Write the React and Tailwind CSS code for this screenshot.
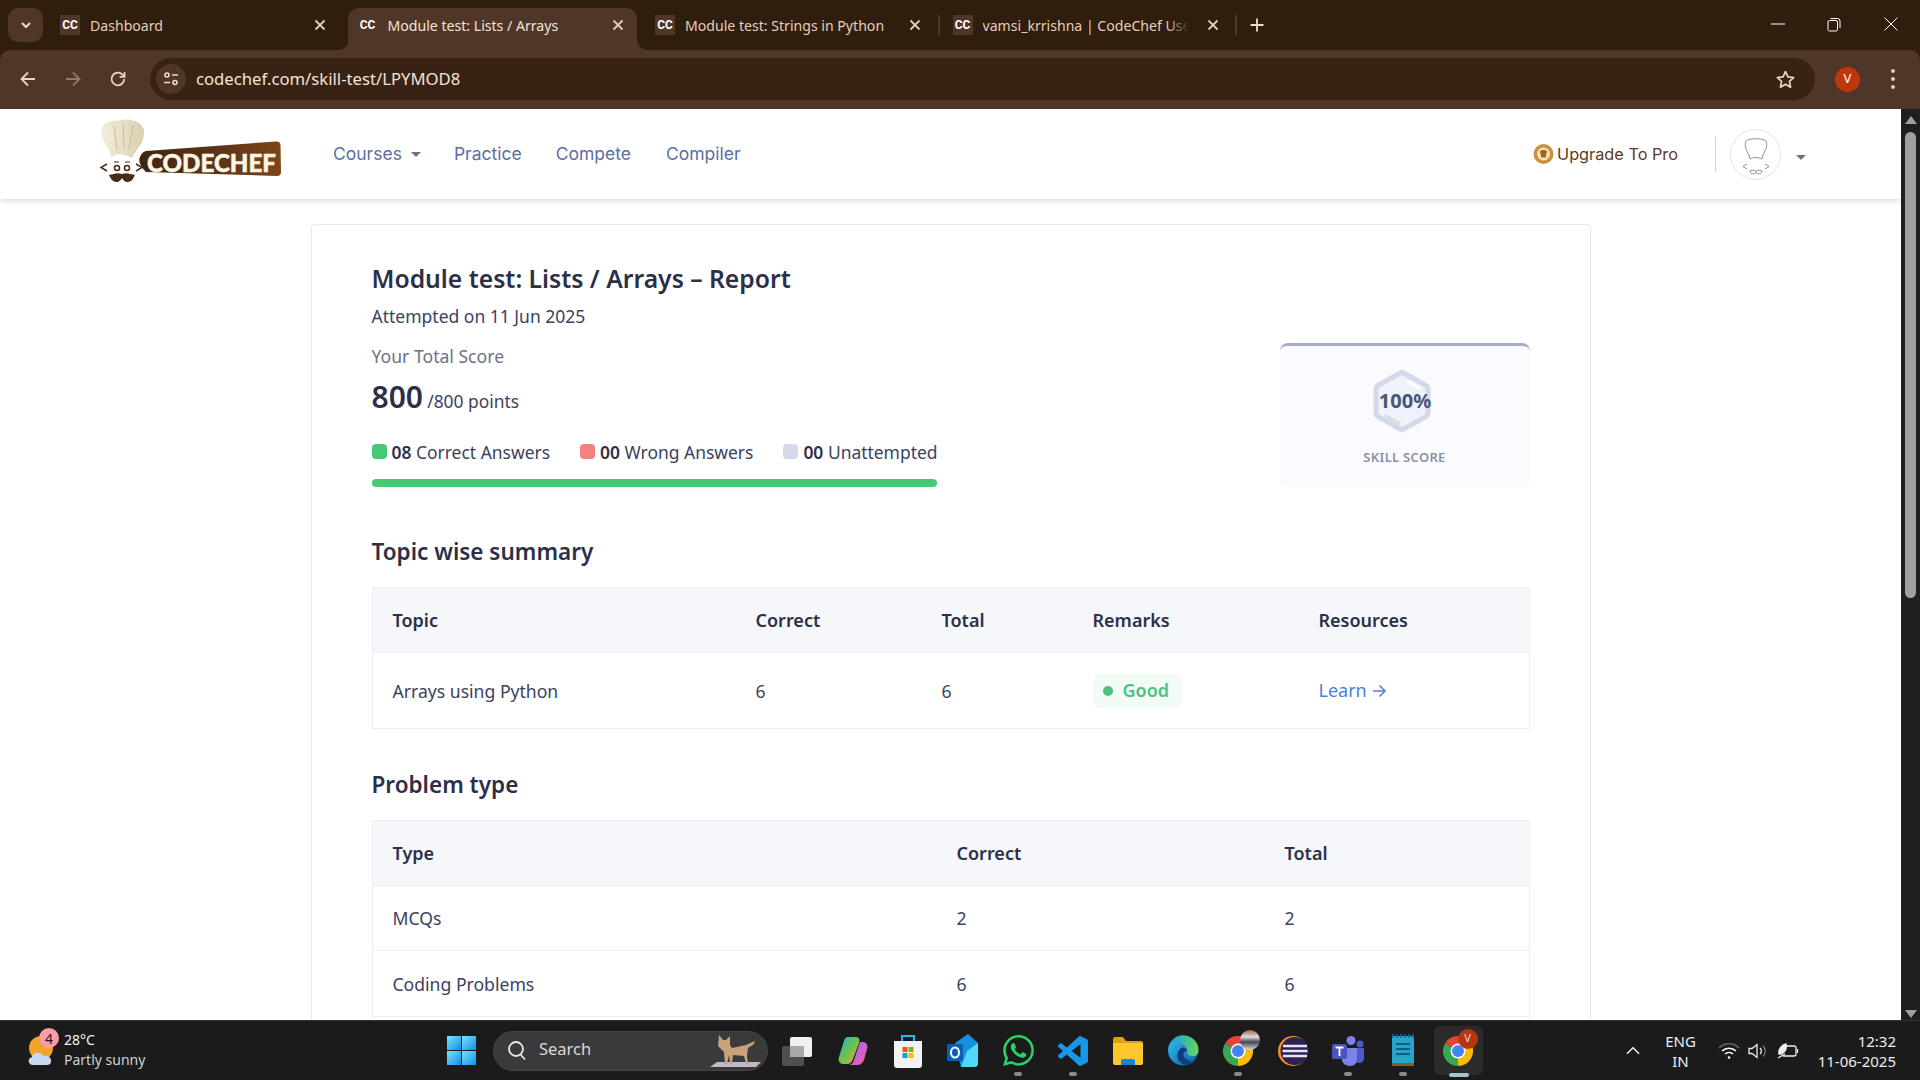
import React from 'react';

const Fav = () => (
  <span className="w-5 h-5 flex items-center justify-center text-[12px] font-bold text-white shrink-0 bg-[#4f3628]" style={{ fontFamily: 'Roboto, sans-serif' }}>CC</span>
);

const X = ({ c = '#e6cdb8', s = 14 }) => (
  <svg width={s} height={s} viewBox="0 0 14 14" fill="none" stroke={c} strokeWidth="1.8"><path d="M2.5 2.5l9 9M11.5 2.5l-9 9" /></svg>
);

const Tab = ({ title, active, sep, fade }) => (
  <div className="relative w-[297.5px] h-[50px] shrink-0 flex items-center">
    {active && (
      <>
        <div className="absolute left-[2.5px] right-[6px] top-2 bottom-0 bg-[#4f3628] rounded-t-[11px]" />
        <svg className="absolute left-[-8px] bottom-0" width="11" height="11" viewBox="0 0 11 11"><path d="M0 11a11 11 0 0 0 11-11v11z" fill="#4f3628" /></svg>
        <svg className="absolute right-[-5px] bottom-0" width="11" height="11" viewBox="0 0 11 11"><path d="M11 11A11 11 0 0 1 0 0v11z" fill="#4f3628" /></svg>
      </>
    )}
    <div className="relative ml-3 mr-[10px]"><Fav /></div>
    <div className="relative w-[216px] overflow-hidden whitespace-nowrap">
      <span className={`text-[14.1px] leading-5 ${active ? 'text-[#f3e3d6]' : 'text-[#e6cdb8]'}`}>{title}</span>
      {fade && <div className="absolute right-0 top-0 bottom-0 w-8 bg-gradient-to-r from-transparent to-[#2f1d0e] to-70%" />}
    </div>
    <div className="relative ml-[7px]"><X /></div>
    {sep && <div className="absolute right-[1px] top-[15px] h-5 w-[2px] bg-[#4f3628]" />}
  </div>
);

const Chrome = ({ s = 30 }) => (
  <svg width={s} height={s} viewBox="0 0 24 24">
    <path d="M12 12L1.6 6A12 12 0 0 1 22.4 6z" fill="#e94235" />
    <path d="M12 12L1.6 6A12 12 0 0 0 12 24z" fill="#34a853" />
    <path d="M12 12L12 24A12 12 0 0 0 22.4 6z" fill="#fbbc04" />
    <circle cx="12" cy="12" r="6" fill="#fff" />
    <circle cx="12" cy="12" r="4.8" fill="#4285f4" />
  </svg>
);

const Icon = ({ children, dot }) => (
  <div className="relative w-[55px] h-[60px] flex items-center justify-center shrink-0">
    {children}
    {dot && <span className="absolute bottom-[5px] left-[23.5px] w-2 h-1 rounded-sm bg-[#8a8a8a]" />}
  </div>
);

const Th = ({ children }) => <div className="pl-5 text-[18px] leading-6 font-semibold text-[#2b3048]">{children}</div>;
const Td = ({ children }) => <div className="pl-5 text-[17.6px] leading-6 text-[#3b4260]">{children}</div>;

const Tally = ({ color, n, label, ml }) => (
  <div className={`flex items-center ${ml}`}>
    <span className={`w-[15px] h-[15px] rounded-[4px] mr-[5px] mt-[-2px] ${color}`} />
    <span className="text-[17.45px] leading-6 text-[#3b4260] whitespace-nowrap"><b className="font-semibold text-[#2b3048]">{n}</b> {label}</span>
  </div>
);

export default function App() {
  return (
    <div className="w-[1920px] h-[1080px] overflow-hidden flex flex-col bg-[#2f1d0e]" style={{ fontFamily: '"Noto Sans", sans-serif' }}>
      {/* tab strip */}
      <div className="h-[50px] bg-[#2f1d0e] flex items-start shrink-0">
        <div className="ml-2 mt-2 mr-[5px] w-[35px] h-[34px] rounded-[10px] bg-[#4f3628] flex items-center justify-center">
          <svg width="12" height="12" viewBox="0 0 12 12" fill="none" stroke="#f0dccb" strokeWidth="2"><path d="M2 4l4 4 4-4" /></svg>
        </div>
        <Tab title="Dashboard" />
        <Tab title="Module test: Lists / Arrays" active />
        <Tab title="Module test: Strings in Python" sep />
        <Tab title="vamsi_krrishna | CodeChef User" sep fade />
        <div className="w-[38px] h-[50px] flex items-center justify-center">
          <svg width="16" height="16" viewBox="0 0 16 16" stroke="#f0dccb" strokeWidth="1.8"><path d="M8 1.5v13M1.5 8h13" /></svg>
        </div>
        <div className="ml-auto flex h-[48px]">
          <div className="w-[56px] flex items-center justify-center"><svg width="14" height="2"><path d="M0 1h14" stroke="#fff" /></svg></div>
          <div className="w-[56px] flex items-center justify-center">
            <svg width="14" height="15" viewBox="0 0 14 15" fill="none" stroke="#fff" strokeWidth="1"><rect x="1" y="3.5" width="9.5" height="10.5" rx="1.5" /><path d="M3.5 1.5h7a2.5 2.5 0 0 1 2.5 2.5v7" /></svg>
          </div>
          <div className="w-[58px] flex items-center justify-center">
            <svg width="14" height="14" viewBox="0 0 14 14" stroke="#fff" strokeWidth="1"><path d="M.5.5l13 13M13.5.5l-13 13" /></svg>
          </div>
        </div>
      </div>

      {/* toolbar */}
      <div className="h-[59px] bg-[#4f3628] rounded-t-[10px] flex items-center shrink-0 pb-[1px] relative">
        <div className="ml-[5px] w-[45px] flex justify-center">
          <svg width="18" height="18" viewBox="0 0 18 18" fill="none" stroke="#e9d3c0" strokeWidth="1.8"><path d="M16 9H2.5M9 2.5L2.5 9 9 15.5" /></svg>
        </div>
        <div className="w-[45px] flex justify-center">
          <svg width="18" height="18" viewBox="0 0 18 18" fill="none" stroke="#8f7868" strokeWidth="1.8"><path d="M2 9h13.5M9 2.5L15.5 9 9 15.5" /></svg>
        </div>
        <div className="w-[45px] flex justify-center">
          <svg width="18" height="18" viewBox="0 0 18 18" fill="none" stroke="#e9d3c0" strokeWidth="1.8"><path d="M15.2 9a6.3 6.3 0 1 1-1.8-4.4L15.5 6.5" /><path d="M15.5 2v4.8h-4.8" /></svg>
        </div>
        <div className="ml-[10px] w-[1665px] h-[42px] rounded-full bg-[#382214] flex items-center">
          <div className="ml-[6px] w-[30px] h-[30px] rounded-full bg-[#4f3628] flex items-center justify-center shrink-0">
            <svg width="16" height="16" viewBox="0 0 16 16" fill="none" stroke="#f0dccb" strokeWidth="1.6"><circle cx="4" cy="4" r="2" /><path d="M9 4h6M1 11.5h6" /><circle cx="12" cy="11.5" r="2" /></svg>
          </div>
          <span className="ml-[10px] text-[16.7px] text-[#f3e3d6] whitespace-nowrap">codechef.com/skill-test/LPYMOD8</span>
          <div className="ml-auto mr-[19px]">
            <svg width="21" height="21" viewBox="0 0 24 24" fill="none" stroke="#e9d3c0" strokeWidth="2" strokeLinejoin="round"><path d="M12 3l2.8 6 6.5.8-4.8 4.4 1.3 6.5L12 17.5l-5.8 3.2 1.3-6.5-4.8-4.4 6.5-.8z" /></svg>
          </div>
        </div>
        <div className="ml-[20px] w-[25px] h-[25px] rounded-full bg-[#bf360c] flex items-center justify-center text-[13px] text-white">V</div>
        <div className="ml-[31px] flex flex-col gap-[4px]">
          <span className="w-[4px] h-[4px] rounded-full bg-[#e9c9b0]" />
          <span className="w-[4px] h-[4px] rounded-full bg-[#e9c9b0]" />
          <span className="w-[4px] h-[4px] rounded-full bg-[#e9c9b0]" />
        </div>
      </div>

      {/* viewport */}
      <div className="flex-1 min-h-0 flex bg-white">
        <div className="flex-1 min-w-0 overflow-hidden">
          <header className="h-[90px] bg-white shadow-[0_2px_5px_rgba(0,0,0,0.14)] flex items-start relative">
            <svg className="ml-[90px] mt-[3px] shrink-0" width="200" height="76" viewBox="0 0 200 76">
              <defs>
                <linearGradient id="bar" x1="0" x2="1"><stop offset="0" stopColor="#3f2412" /><stop offset="0.6" stopColor="#5f3517" /><stop offset="1" stopColor="#7c4618" /></linearGradient>
                <linearGradient id="hat" x1="0" x2="1"><stop offset="0" stopColor="#f3eedc" /><stop offset="1" stopColor="#d9d0b0" /></linearGradient>
              </defs>
              <path d="M56 39L186 29.5Q190 29 190.500 33L191 60Q191 64 187 64L56 60Q47 51 50 45Q52 40 56 39z" fill="url(#bar)" />
              <path d="M13 27C8 17 13 8 27 9 42 4 56 12 54 22 53 32 46 38 42 46 32 41 25 41 22 46 19 38 16 33 13 27z" fill="url(#hat)" />
              <path d="M24 14l3 24M33 11l1 26M43 13l-4 24" stroke="#c9bf9c" strokeWidth="1" fill="none" />
              <path d="M17 52l-6 3.500 6 3.500M46 52l6 3.500-6 3.500" stroke="#4a2c17" strokeWidth="1.500" fill="none" />
              <circle cx="27" cy="56" r="2.500" fill="none" stroke="#4a2c17" strokeWidth="1.500" />
              <circle cx="37" cy="56" r="2.500" fill="none" stroke="#4a2c17" strokeWidth="1.500" />
              <path d="M24 50h5M35 50h5" stroke="#4a2c17" strokeWidth="1" />
              <path d="M32 62c-3-1-6-1-8 0-4 1-6 0-4 3 1 3 4 5 7 5 2 0 4-2 5-4 1 2 3 4 5 4 3 0 6-2 7-5 2-3 0-2-4-3-2-1-5-1-8 0z" fill="#4a2c17" />
              <text x="57" y="60" fill="#fbf6e4" stroke="#fbf6e4" strokeWidth="0.5" textLength="129" lengthAdjust="spacingAndGlyphs" fontSize="25" fontWeight="900" style={{ fontFamily: 'Lato, sans-serif' }}>CODECHEF</text>
            </svg>
            <nav className="ml-[43px] h-[90px] flex items-center text-[17.5px] text-[#5a6ea3]" style={{ fontFamily: 'Inter, sans-serif' }}>
              <span>Courses</span>
              <span className="ml-[9px] w-0 h-0 border-l-[5px] border-r-[5px] border-t-[5px] border-l-transparent border-r-transparent border-t-[#6b7280]" />
              <span className="ml-[33px]">Practice</span>
              <span className="ml-[34px]">Compete</span>
              <span className="ml-[35px]">Compiler</span>
            </nav>
            <div className="ml-auto h-[90px] flex items-center">
              <svg width="21" height="22" viewBox="0 0 21 22">
                <circle cx="10.500" cy="11" r="10" fill="#c8913f" />
                <circle cx="10.500" cy="11" r="6.500" fill="#f6e2b8" />
                <path d="M7 8.500c0-2 7-2 7 0l-1 4v2H8v-2z" fill="#a5671d" />
              </svg>
              <span className="ml-[3px] text-[16.3px] text-[#5c3a1e] whitespace-nowrap" style={{ fontFamily: 'Inter, sans-serif' }}>Upgrade To Pro</span>
              <span className="ml-[37px] w-px h-[35px] bg-[#cfd2d8]" />
              <div className="ml-[14px] w-[51px] h-[51px] rounded-full border border-[#e2e4ea] flex items-center justify-center">
                <svg width="40" height="44" viewBox="0 0 40 44" fill="none" stroke="#8b8f98" strokeWidth="1">
                  <path d="M10 9c3-3 16-3 20 0 2 4 0 8-3 14l-1 4c-4-2-9-2-12 0l-1-4c-3-5-5-10-3-14z" />
                  <path d="M11 32l-4 2.500 4 2.500M29 32l4 2.500-4 2.500" />
                  <path d="M20 39c-2-1-5-1-6 0 0 3 5 4 6 1 1 3 6 2 6-1-1-1-4-1-6 0z" />
                </svg>
              </div>
              <span className="ml-[15px] mt-[6px] w-0 h-0 border-l-[5px] border-r-[5px] border-t-[5px] border-l-transparent border-r-transparent border-t-[#6b7280]" />
              <span className="w-[95px]" />
            </div>
          </header>

          <main className="w-[1280px] mx-auto mt-[25px] bg-white border border-[#e6e8f0] rounded-[4px] px-[60px] pt-[38px] pb-10">
            <div className="flex justify-between">
              <div className="w-[565px]">
                <h1 className="text-[24.7px] leading-8 font-semibold text-[#2b3048]">Module test: Lists / Arrays – Report</h1>
                <p className="mt-[9px] text-[17.5px] leading-6 text-[#3b4260]">Attempted on 11 Jun 2025</p>
                <p className="mt-[16px] text-[17.6px] leading-6 text-[#6b7288]">Your Total Score</p>
                <p className="mt-[9px] leading-10 text-[#2b3048] whitespace-nowrap"><span className="text-[30px] font-semibold">800</span> <span className="text-[17.4px] text-[#3b4260]">/800 points</span></p>
                <div className="mt-[18px] flex">
                  <Tally color="bg-[#44c974]" n="08" label="Correct Answers" />
                  <Tally color="bg-[#f58080]" n="00" label="Wrong Answers" ml="ml-[30px]" />
                  <Tally color="bg-[#d3d9e8]" n="00" label="Unattempted" ml="ml-[30px]" />
                </div>
                <div className="mt-[15px] h-2 rounded-full bg-[#44c974]" />
              </div>
              <div className="self-end w-[250px] h-[144px] rounded-lg border-t-[3px] border-[#a3acc9] bg-[#fbfbff] flex flex-col items-center">
                <div className="relative mt-[23px] ml-[-5px] w-[60px] h-[64px] flex items-center justify-center">
                  <svg className="absolute inset-0" width="60" height="64" viewBox="0 0 60 64">
                    <path d="M30 3L54 16.500Q56 18 56 20V44Q56 46 54 47.500L30 61 6 47.500Q4 46 4 44V20Q4 18 6 16.500z" fill="#eef2f9" stroke="#d3d9e6" strokeWidth="5" strokeLinejoin="round" />
                    <path d="M36 13l11 6" stroke="#fff" strokeWidth="3" strokeLinecap="round" />
                    <path d="M14 47l13 7" stroke="#d8deea" strokeWidth="3.500" strokeLinecap="round" />
                  </svg>
                  <span className="relative ml-[6px] text-[20px] font-bold text-[#4a5578]">100%</span>
                </div>
                <span className="mt-[14px] text-[13px] leading-5 font-semibold tracking-[0.3px] text-[#8a90a8]">SKILL SCORE</span>
              </div>
            </div>

            <h2 className="mt-[49px] text-[22.5px] leading-8 font-semibold text-[#2b3048]">Topic wise summary</h2>
            <div className="mt-[19px] border border-[#eceef6]">
              <div className="grid grid-cols-[363px_186px_151px_226px_1fr] items-center h-[65px] bg-[#f6f7fb] border-b border-[#eceef6]">
                <Th>Topic</Th><Th>Correct</Th><Th>Total</Th><Th>Remarks</Th><Th>Resources</Th>
              </div>
              <div className="grid grid-cols-[363px_186px_151px_226px_1fr] items-center h-[75px]">
                <Td>Arrays using Python</Td><Td>6</Td><Td>6</Td>
                <div className="pl-5">
                  <span className="inline-flex items-center w-[89px] h-[34px] rounded-lg bg-[#f2fbf6] pl-[10px] text-[18px] font-semibold text-[#4fc17f]">
                    <span className="w-[10px] h-[10px] rounded-full bg-[#4fc17f] mr-[10px]" />Good
                  </span>
                </div>
                <div className="pl-5 flex items-center text-[18px] text-[#4a80e0]">Learn
                  <svg className="ml-[5px]" width="15" height="14" viewBox="0 0 15 14" fill="none" stroke="#4a80e0" strokeWidth="1.500"><path d="M1 7h12M7.500 1.500L13 7l-5.500 5.500" /></svg>
                </div>
              </div>
            </div>

            <h2 className="mt-[40px] text-[22.5px] leading-8 font-semibold text-[#2b3048]">Problem type</h2>
            <div className="mt-[19px] border border-[#eceef6]">
              <div className="grid grid-cols-[564px_328px_1fr] items-center h-[65px] bg-[#f6f7fb] border-b border-[#eceef6]">
                <Th>Type</Th><Th>Correct</Th><Th>Total</Th>
              </div>
              <div className="grid grid-cols-[564px_328px_1fr] items-center h-[65px] border-b border-[#eceef6]">
                <Td>MCQs</Td><Td>2</Td><Td>2</Td>
              </div>
              <div className="grid grid-cols-[564px_328px_1fr] items-center h-[65px]">
                <Td>Coding Problems</Td><Td>6</Td><Td>6</Td>
              </div>
            </div>
          </main>
        </div>

        {/* scrollbar */}
        <div className="w-[19px] bg-[#1f1f1f] flex flex-col items-center shrink-0">
          <div className="mt-[7px] w-0 h-0 border-l-[6px] border-r-[6px] border-b-[8px] border-l-transparent border-r-transparent border-b-[#a0a0a0]" />
          <div className="mt-[8px] w-[11px] h-[466px] rounded-full bg-[#a0a0a0]" />
          <div className="mt-auto mb-[2px] w-0 h-0 border-l-[6px] border-r-[6px] border-t-[8px] border-l-transparent border-r-transparent border-t-[#a0a0a0]" />
        </div>
      </div>

      {/* taskbar */}
      <div className="h-[60px] bg-[#1b1b1b] border-t border-[#333] flex items-center shrink-0 text-white relative">
        <div className="relative w-[447px] h-full flex items-center shrink-0">
          <svg className="ml-[27px]" width="30" height="32" viewBox="0 0 30 32">
            <circle cx="14" cy="13" r="12" fill="#f3a32a" />
            <path d="M6 30c-5 0-6-7-1-8 1-5 9-6 11-1 5-1 9 2 8 6 0 2-2 3-4 3z" fill="#c5d9f2" />
          </svg>
          <span className="absolute left-[39px] top-[7px] w-5 h-5 rounded-full bg-[#ff9aa8] flex items-center justify-center text-[14px] text-[#1b1b1b]">4</span>
          <div className="ml-[7px] mt-[-2px] flex flex-col text-[14px] leading-5">
            <span className="text-[#f2f2f2]">28°C</span>
            <span className="text-[#d0d0d0] whitespace-nowrap">Partly sunny</span>
          </div>
        </div>
        <svg className="shrink-0" width="29" height="29" viewBox="0 0 29 29">
          <defs>
            <linearGradient id="win" x1="0" y1="0" x2="1" y2="1"><stop offset="0" stopColor="#7fe2f8" /><stop offset="1" stopColor="#0f8fe8" /></linearGradient>
          </defs>
          <rect width="14" height="14" y="0" fill="url(#win)" /><rect x="15" width="14" height="14" fill="url(#win)" />
          <rect y="15" width="14" height="14" fill="url(#win)" /><rect x="15" y="15" width="14" height="14" fill="url(#win)" />
        </svg>
        <div className="ml-[17px] w-[275px] h-10 rounded-full bg-[#3a3a3a] border border-[#444] flex items-center shrink-0">
          <svg className="ml-[13px]" width="20" height="21" viewBox="0 0 20 21" fill="none" stroke="#e6e6e6" strokeWidth="1.800"><circle cx="9" cy="9" r="7" /><path d="M13.500 14.500l4.500 5" /></svg>
          <span className="ml-[12px] mt-[-2px] text-[16.5px] text-[#d8d8d8]">Search</span>
          <svg className="ml-auto mr-[5px]" width="52" height="34" viewBox="0 0 52 34">
            <path d="M0 33l7-5h44l-5 5z" fill="#c6b8c8" />
            <path d="M9 1l4 5h3l4-4 0 9 2 3 14-3 9-4-1 3-6 4-1 8 1 8h-2l-2-8-11-1-1 9h-2l-1-9-2 9h-2l-1-12-6-6z" fill="#c9a27c" />
          </svg>
        </div>
        <div className="ml-[2.500px] flex">
          <Icon>
            <svg width="34" height="32" viewBox="0 0 34 32"><rect x="1" y="11" width="22" height="20" rx="2" fill="#4f4f4f" /><rect x="9" y="2" width="22" height="20" rx="2" fill="#f0f0f0" /><rect x="9" y="11" width="14" height="11" fill="#a9a9a9" /></svg>
          </Icon>
          <Icon>
            <svg width="30" height="32" viewBox="0 0 30 32">
              <defs>
                <linearGradient id="cp1" x1="0" y1="0" x2="1" y2="1"><stop offset="0" stopColor="#18b8e0" /><stop offset="0.5" stopColor="#6cc24a" /><stop offset="1" stopColor="#f6a944" /></linearGradient>
                <linearGradient id="cp2" x1="0" y1="0" x2="1" y2="1"><stop offset="0" stopColor="#8a6be8" /><stop offset="0.6" stopColor="#d45fd0" /><stop offset="1" stopColor="#f0608a" /></linearGradient>
              </defs>
              <path d="M22 7h3c4 0 5 4 4 7l-3 11c-1 3-4 5-7 5h-9c3 0 5-2 6-5z" fill="url(#cp2)" />
              <path d="M10 2h8c3 0 4 3 3 6l-6 16c-1 3-3 5-6 5H5c-4 0-5-4-4-7L6 6c1-3 2-4 4-4z" fill="url(#cp1)" />
            </svg>
          </Icon>
          <Icon>
            <svg width="30" height="36" viewBox="0 0 30 36">
              <path d="M9 8V3h12v5" fill="none" stroke="#29b6f6" strokeWidth="2" />
              <path d="M1 8h28v24a3 3 0 0 1-3 3H4a3 3 0 0 1-3-3z" fill="#f2f2f2" />
              <rect x="9.500" y="14" width="5" height="5" fill="#f25022" /><rect x="15.500" y="14" width="5" height="5" fill="#7fba00" />
              <rect x="9.500" y="20" width="5" height="5" fill="#00a4ef" /><rect x="15.500" y="20" width="5" height="5" fill="#ffb900" />
            </svg>
          </Icon>
          <Icon>
            <svg width="32" height="36" viewBox="0 0 32 36">
              <path d="M8 10L21 1l10 9v20a4 4 0 0 1-4 4H14z" fill="#1490df" />
              <path d="M20 18l11-8v20a4 4 0 0 1-4 4H14z" fill="#50d9ff" />
              <rect x="0" y="11" width="16" height="17" rx="1.500" fill="#0a5fb4" />
              <ellipse cx="8" cy="19.500" rx="4" ry="5" fill="none" stroke="#fff" strokeWidth="2" />
            </svg>
          </Icon>
          <Icon dot>
            <svg width="31" height="33" viewBox="0 0 24 24" fill="#25d366"><path d="M17.472 14.382c-.297-.149-1.758-.867-2.03-.967-.273-.099-.471-.148-.67.15-.197.297-.767.966-.94 1.164-.173.199-.347.223-.644.075-.297-.15-1.255-.463-2.39-1.475-.883-.788-1.48-1.761-1.653-2.059-.173-.297-.018-.458.13-.606.134-.133.298-.347.446-.52.149-.174.198-.298.298-.497.099-.198.05-.371-.025-.52-.075-.149-.669-1.612-.916-2.207-.242-.579-.487-.5-.669-.51-.173-.008-.371-.01-.57-.01-.198 0-.52.074-.792.372-.272.297-1.04 1.016-1.04 2.479 0 1.462 1.065 2.875 1.213 3.074.149.198 2.096 3.2 5.077 4.487.709.306 1.262.489 1.694.625.712.227 1.36.195 1.871.118.571-.085 1.758-.719 2.006-1.413.248-.694.248-1.289.173-1.413-.074-.124-.272-.198-.57-.347m-5.421 7.403h-.004a9.87 9.87 0 01-5.031-1.378l-.361-.214-3.741.982.998-3.648-.235-.374a9.86 9.86 0 01-1.51-5.26c.001-5.45 4.436-9.884 9.888-9.884 2.64 0 5.122 1.03 6.988 2.898a9.825 9.825 0 012.893 6.994c-.003 5.45-4.437 9.884-9.885 9.884m8.413-18.297A11.815 11.815 0 0012.05 0C5.495 0 .16 5.335.157 11.892c0 2.096.547 4.142 1.588 5.945L.057 24l6.305-1.654a11.882 11.882 0 005.683 1.448h.005c6.554 0 11.89-5.335 11.893-11.893a11.821 11.821 0 00-3.48-8.413z" /></svg>
          </Icon>
          <Icon dot>
            <svg width="30" height="32" viewBox="0 0 24 24" fill="#1a96e6"><path d="M23.15 2.587L18.21.21a1.494 1.494 0 0 0-1.705.29l-9.46 8.63-4.12-3.128a.999.999 0 0 0-1.276.057L.327 7.261A1 1 0 0 0 .326 8.74L3.899 12 .326 15.26a1 1 0 0 0 .001 1.479L1.65 17.94a.999.999 0 0 0 1.276.057l4.12-3.128 9.46 8.63a1.492 1.492 0 0 0 1.704.29l4.942-2.377A1.5 1.5 0 0 0 24 20.06V3.939a1.5 1.5 0 0 0-.85-1.352zm-5.146 14.861L10.826 12l7.178-5.448v10.896z" /></svg>
          </Icon>
          <Icon>
            <svg width="30" height="28" viewBox="0 0 30 28">
              <path d="M0 2a2 2 0 0 1 2-2h8l3 4h15a2 2 0 0 1 2 2v4H0z" fill="#d9a20a" />
              <path d="M0 6h30v20a2 2 0 0 1-2 2H2a2 2 0 0 1-2-2z" fill="#fcc62d" />
              <path d="M8 28v-4a2 2 0 0 1 2-2h10a2 2 0 0 1 2 2v4z" fill="#1585d8" />
            </svg>
          </Icon>
          <Icon>
            <svg width="31" height="33" viewBox="0 0 31 33">
              <defs>
                <linearGradient id="ed" x1="0" y1="0" x2="1" y2="1"><stop offset="0" stopColor="#35c1f1" /><stop offset="1" stopColor="#0c59a4" /></linearGradient>
                <linearGradient id="ed2" x1="0" y1="0" x2="1" y2="0"><stop offset="0" stopColor="#1b9de2" /><stop offset="1" stopColor="#66d85a" /></linearGradient>
              </defs>
              <circle cx="15" cy="16.500" r="15" fill="url(#ed)" />
              <path d="M3 9C6 2 12 1.500 15 1.500 24 1.500 31 8 30.500 17c0 4-4 6-8 5-4-1-3-4-3.500-6C18 10 9 5 3 9z" fill="url(#ed2)" />
              <path d="M12 15c3-3 7-1 7 2-3 0-5 3-2 7 3 3 7 4 10 3-3 4-10 6-15 1-4-4-3-10 0-13z" fill="#0f3f7d" />
            </svg>
          </Icon>
          <Icon dot>
            <div className="relative w-[30px] h-[30px]">
              <Chrome />
              <span className="absolute left-[17px] top-[-6px] w-5 h-5 rounded-full bg-[linear-gradient(#a9614f_0%,#dcdcdc_35%,#445_60%,#ddd_100%)]" />
            </div>
          </Icon>
          <Icon>
            <svg width="32" height="32" viewBox="0 0 32 32">
              <circle cx="16" cy="16" r="15" fill="#f7941e" />
              <circle cx="17.500" cy="16" r="14" fill="#2c2255" />
              <path d="M6 11h24M5.500 16h25M6 21h24" stroke="#e8e4f5" strokeWidth="2.500" />
            </svg>
          </Icon>
          <Icon dot>
            <svg width="32" height="30" viewBox="0 0 32 30">
              <circle cx="19" cy="4.500" r="4.500" fill="#7b83eb" />
              <circle cx="28" cy="8" r="3.500" fill="#5059c9" />
              <path d="M23 12h9v10c0 3-2 5-5 5-1 0-3-1-4-2z" fill="#5059c9" />
              <path d="M10 12h15v12c0 3-3 6-7 6s-8-3-8-6z" fill="#7b83eb" />
              <rect x="0" y="8" width="15" height="15" rx="1.500" fill="#4b53bc" />
              <path d="M3.500 11.500h8M7.500 11.500v8.500" stroke="#fff" strokeWidth="1.800" />
            </svg>
          </Icon>
          <Icon dot>
            <svg width="22" height="33" viewBox="0 0 22 33">
              <rect x="0" y="2" width="22" height="28" fill="#29a3c9" />
              <rect x="0" y="29" width="22" height="3" fill="#8a5a2b" />
              <path d="M1 0v4M5 0v4M9 0v4M13 0v4M17 0v4M21 0v4" stroke="#1a6a8a" strokeWidth="1.500" />
              <path d="M4 10h14M4 15h14M4 20h14" stroke="#0d5f80" strokeWidth="2" />
            </svg>
          </Icon>
          <div className="relative w-[55px] h-[60px] flex items-center justify-center shrink-0">
            <div className="absolute left-[3px] top-[5px] w-[49px] h-[49px] rounded-md bg-[#2b2b2b]" />
            <div className="relative"><Chrome /></div>
            <span className="absolute left-[27px] top-[8px] w-[20px] h-[20px] rounded-full bg-[#b5360f] flex items-center justify-center text-[11px] text-[#f0d8c8]">V</span>
            <span className="absolute bottom-[4px] left-[18px] w-[20px] h-[4px] rounded-sm bg-[#a5c4cc]" />
          </div>
        </div>
        <div className="ml-[140px] w-[14px] flex justify-center shrink-0">
          <svg width="15" height="9" viewBox="0 0 15 9" fill="none" stroke="#eee" strokeWidth="1.600"><path d="M1 8l6.500-6.500L14 8" /></svg>
        </div>
        <div className="ml-[17px] w-[48px] flex flex-col items-center text-[15px] leading-5 text-[#eee]"><span>ENG</span><span>IN</span></div>
        <div className="ml-[13px] flex items-center">
          <svg width="22" height="18" viewBox="0 0 22 18" fill="none" stroke="#fff" strokeWidth="1.500"><path d="M1 6a14 14 0 0 1 20 0" stroke="#666" /><path d="M4 9a10 10 0 0 1 14 0M7 12a6 6 0 0 1 8 0" /><circle cx="11" cy="15.500" r="1.300" fill="#fff" stroke="none" /></svg>
          <svg className="ml-[8px]" width="21" height="18" viewBox="0 0 21 18" fill="none" stroke="#eee" strokeWidth="1.300"><path d="M1 6.500h3L9 2.500v13l-5-4H1z" /><path d="M12 6a4 4 0 0 1 0 6" /><path d="M15 3.500a8 8 0 0 1 0 11" stroke="#777" /></svg>
          <svg className="ml-[8px]" width="22" height="18" viewBox="0 0 22 18" fill="none" stroke="#eee" strokeWidth="1.300"><path d="M8 4h9a2 2 0 0 1 2 2v6a2 2 0 0 1-2 2H6" /><path d="M20.500 7v4" /><path d="M2 12c-1-5 3-9 7-10 1 5-1 9-5 10z" fill="#eee" /><path d="M1 16l7-4" /></svg>
        </div>
        <div className="ml-auto mr-[24px] flex flex-col items-end text-[15px] leading-5 text-[#eee]"><span>12:32</span><span>11-06-2025</span></div>
      </div>
    </div>
  );
}
